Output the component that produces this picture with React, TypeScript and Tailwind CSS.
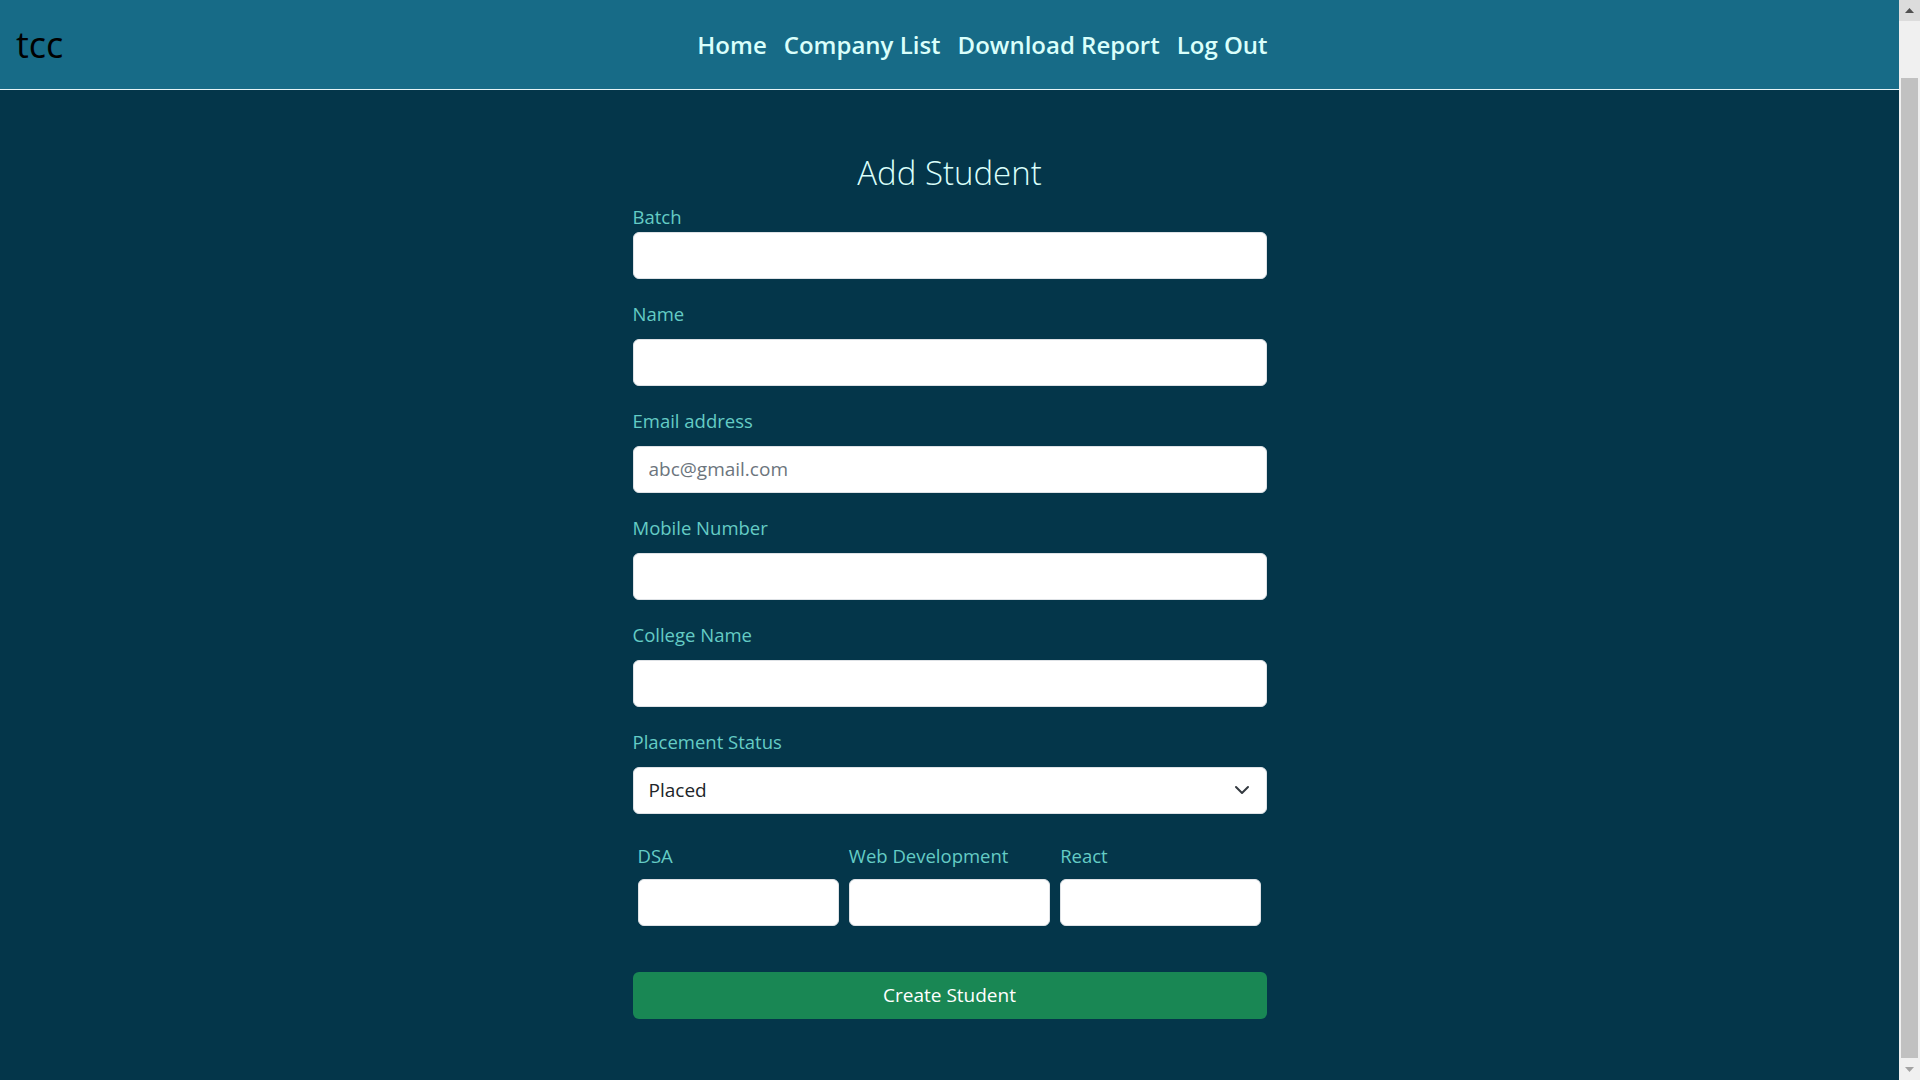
import React from "react";

const fields = [
  { label: "Name", type: "text", placeholder: "" },
  { label: "Email address", type: "email", placeholder: "abc@gmail.com" },
  { label: "Mobile Number", type: "text", placeholder: "" },
  { label: "College Name", type: "text", placeholder: "" },
];

const scores = ["DSA", "Web Development", "React"];

const inputCls =
  "block w-full h-[47px] rounded-[6px] border border-[#dee2e6] bg-white px-[15px] text-[19px] text-[#212529] placeholder:text-[#6c757d] outline-none";

const labelCls = "block text-[18.5px] leading-[30px] text-[#64CCC5]";

// window scrollbar as seen in the screenshot
function ScrollBar() {
  return (
    <div className="w-[21px] shrink-0 h-full bg-[#f0f0f0] flex flex-col items-center">
      <div className="h-[21px] w-full bg-[#dcdcdc] flex items-center justify-center">
        <svg width="9" height="5" viewBox="0 0 9 5">
          <path d="M0 5 4.5 0 9 5z" fill="#505050" />
        </svg>
      </div>
      <div className="flex-1 w-full flex flex-col px-[2px] pt-[57px] pb-[1px]">
        <div className="flex-1 bg-[#c1c1c1]" />
      </div>
      <div className="h-[21px] w-full flex items-center justify-center">
        <svg width="9" height="5" viewBox="0 0 9 5">
          <path d="M0 0 4.5 5 9 0z" fill="#a3a3a3" />
        </svg>
      </div>
    </div>
  );
}

export default function App() {
  return (
    <div
      className="h-screen overflow-hidden flex bg-[#04364A]"
      style={{ fontFamily: '"Open Sans", "Noto Sans", sans-serif' }}
    >
      <div className="flex-1 min-w-0 h-full overflow-hidden">
        <nav className="h-[90px] bg-[#176B87] border-b border-[#e6f4f7] flex items-center">
          <div className="pl-4 text-[36px] text-black leading-none">tcc</div>
          <div className="ml-[634px] flex items-center gap-[17px] text-[24px] font-semibold text-[#DAFFFB]">
            <a href="#">Home</a>
            <a href="#">Company List</a>
            <a href="#">Download Report</a>
            <a href="#">Log Out</a>
          </div>
        </nav>

        <div className="mx-auto w-[634px] pt-[63px] pb-[120px]">
          <h1 className="text-center text-[33px] font-light leading-[1.2] text-[#DAFFFB] mb-[9px]">
            Add Student
          </h1>
          <form onSubmit={(e) => e.preventDefault()}>
            <div className="mb-[20px]">
              <label className={labelCls}>Batch</label>
              <input type="text" className={inputCls} />
            </div>
            {fields.map((f) => (
              <div key={f.label} className="mb-[20px]">
                <label className={labelCls + " mb-[10px]"}>{f.label}</label>
                <input type={f.type} placeholder={f.placeholder} className={inputCls} />
              </div>
            ))}
            <div className="mb-[20px]">
              <label className={labelCls + " mb-[10px]"}>Placement Status</label>
              <div className="relative">
                <select className={inputCls + " appearance-none"} defaultValue="Placed">
                  <option>Placed</option>
                  <option>Not Placed</option>
                </select>
                <svg
                  className="absolute right-[17px] top-[15px] pointer-events-none"
                  width="16"
                  height="16"
                  viewBox="0 0 16 16"
                  fill="none"
                  stroke="#343a40"
                  strokeWidth="2"
                  strokeLinecap="round"
                  strokeLinejoin="round"
                >
                  <path d="m2 5 6 6 6-6" />
                </svg>
              </div>
            </div>
            <div className="grid grid-cols-3 gap-[10px] px-[5px] pt-[7px]">
              {scores.map((s) => (
                <div key={s}>
                  <label className={labelCls + " mb-[8px]"}>{s}</label>
                  <input type="number" className={inputCls} />
                </div>
              ))}
            </div>
            <button
              type="submit"
              className="mt-[46px] block w-full h-[47px] rounded-[6px] bg-[#198754] text-[19px] text-white"
            >
              Create Student
            </button>
          </form>
        </div>
      </div>
      <ScrollBar />
    </div>
  );
}
